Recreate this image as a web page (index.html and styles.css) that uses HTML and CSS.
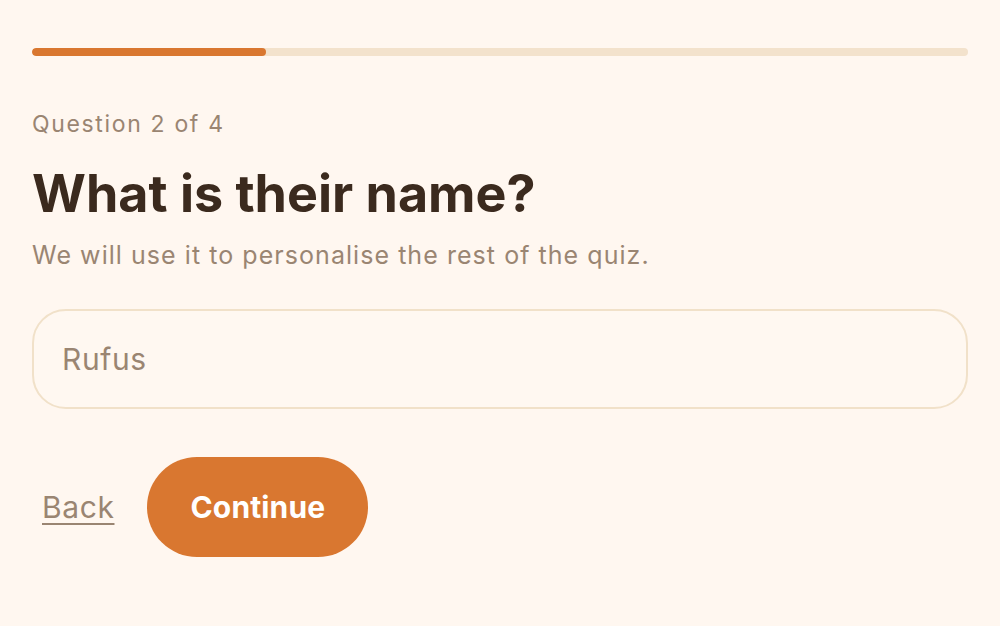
FILE: index.html
```html
<!DOCTYPE html>
<html lang="en">
<head>
<meta charset="utf-8">
<title>Quiz — Question 2 of 4</title>
<link rel="stylesheet" href="styles.css">
</head>
<body>
<main class="quiz">
  <div class="progress"><div class="progress-fill" style="width:25%"></div></div>
  <p class="step">Question 2 of 4</p>
  <h1 class="title">What is their name?</h1>
  <p class="hint">We will use it to personalise the rest of the quiz.</p>
  <input class="name-input" type="text" value="Rufus" aria-label="Name">
  <div class="actions">
    <a class="back" href="#">Back</a>
    <button class="continue" type="button">Continue</button>
  </div>
</main>
</body>
</html>
```

FILE: styles.css
```css
html, body {
  margin: 0;
  padding: 0;
  background: #fff7f0;
}
body {
  font-family: Inter, "Noto Sans", sans-serif;
  color: #3b2a1e;
}
.quiz {
  padding: 48px 32px;
  display: flex;
  flex-direction: column;
}
.progress {
  height: 8px;
  border-radius: 4px;
  background: #f3e2cc;
  overflow: hidden;
}
.progress-fill {
  height: 100%;
  background: #d97730;
  border-radius: 4px;
}
.step {
  margin: 52px 0 0;
  font-size: 23px;
  line-height: 33px;
  color: #9a8572;
  letter-spacing: 0.072em;
}
.title {
  margin: 22px 0 0;
  font-size: 52px;
  line-height: 62px;
  font-weight: 700;
  color: #3b2a1e;
}
.hint {
  margin: 12px 0 0;
  font-size: 25px;
  line-height: 36px;
  color: #9a8572;
  letter-spacing: 0.042em;
}
.name-input {
  margin-top: 36px;
  box-sizing: border-box;
  height: 100px;
  width: 100%;
  border: 2px solid #f1e1c9;
  border-radius: 34px;
  background: #fff8f1;
  padding: 0 28px;
  font-family: Inter, "Noto Sans", sans-serif;
  font-size: 30px;
  letter-spacing: 0.02em;
  color: #9a8572;
  outline: none;
}
.actions {
  margin-top: 48px;
  display: flex;
  align-items: center;
  gap: 23px;
}
.back {
  padding: 0 10px;
  font-size: 30px;
  letter-spacing: 0.02em;
  color: #9a8572;
  text-decoration: underline;
  text-decoration-thickness: 2px;
  text-underline-offset: 5px;
}
.continue {
  height: 100px;
  padding: 0 43px;
  border: none;
  border-radius: 50px;
  background: #d97730;
  color: #ffffff;
  font-family: Inter, "Noto Sans", sans-serif;
  font-size: 30px;
  font-weight: 700;
  letter-spacing: 0.005em;
}
```
